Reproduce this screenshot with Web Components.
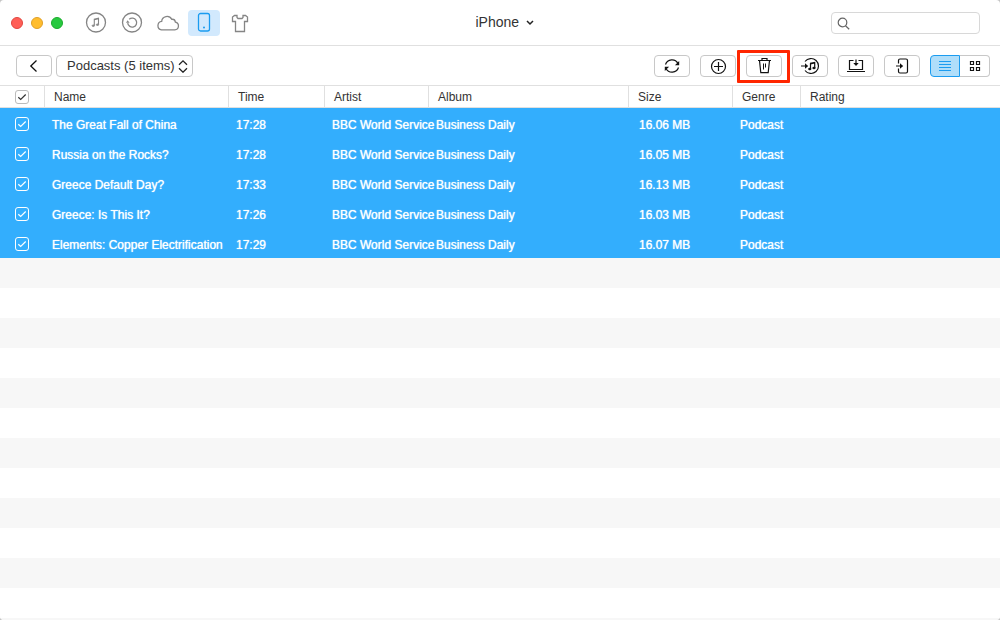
<!DOCTYPE html>
<html lang="en">
<head>
<meta charset="utf-8">
<title>iPhone</title>
<style>
  html {
    background: #c4c4c4;
  }
  body {
    margin: 0;
    font-family: "Liberation Sans", Arial, sans-serif;
    font-size: 12px;
    color: #333;
  }
</style>
</head>
<body>
<device-window>
  <title-bar slot="title">
    <nav-tab label="Music">
      <svg width="22" height="22" viewBox="0 0 22 22" fill="none" stroke="currentColor" stroke-width="1.3">
        <circle cx="11" cy="10.500" r="9.500"/>
        <path d="M9.300 13.500V7.200l4.200-.9v6.200M9.300 7.600l4.200-.9" stroke-width="1.100"/>
        <ellipse cx="8.300" cy="13.700" rx="1.200" ry=".8" fill="currentColor" stroke-width=".8"/>
        <ellipse cx="12.500" cy="12.700" rx="1.200" ry=".8" fill="currentColor" stroke-width=".8"/>
      </svg>
    </nav-tab>
    <nav-tab label="Backups">
      <svg width="22" height="22" viewBox="0 0 22 22" fill="none" stroke="currentColor" stroke-width="1.3">
        <circle cx="11" cy="10.500" r="9.500"/>
        <path d="M8.200 7.200a4.500 4.500 0 1 1-1.500 4"/>
        <path d="M5 10.800l1.600-2.600 2 2.600z" fill="currentColor" stroke="none"/>
      </svg>
    </nav-tab>
    <nav-tab label="iCloud">
      <svg width="24" height="22" viewBox="0 0 24 22" fill="none" stroke="currentColor" stroke-width="1.3">
        <path d="M5.500 17.800h13.300a3.900 3.900 0 0 0 .6-7.700 3.300 3.300 0 0 0-3.700-2.800A5.300 5.300 0 0 0 5.700 9.300a4.300 4.300 0 0 0-.2 8.500z"/>
      </svg>
    </nav-tab>
    <nav-tab label="Device" active>
      <svg width="14" height="22" viewBox="0 0 14 22" fill="none" stroke="currentColor" stroke-width="1.3">
        <rect x="1.500" y="1.500" width="11" height="17.500" rx="2"/>
        <circle cx="7" cy="15.500" r="1" fill="currentColor" stroke="none"/>
      </svg>
    </nav-tab>
    <nav-tab label="Toolkit">
      <svg width="18" height="22" viewBox="0 0 18 22" fill="none" stroke="currentColor" stroke-width="1.3">
        <path d="M6 3.500H3.500L1.500 5v4.500h3v10h9v-10h3V5l-2-1.500H12v2L11 6.500H7l-1-1z"/>
      </svg>
    </nav-tab>
  </title-bar>

  <tool-bar slot="tools">
    <tool-button slot="start" label="Back">
      <svg width="20" height="20" viewBox="0 0 20 20" fill="none" stroke="currentColor" stroke-width="1.300">
        <path d="M12.500 4.500L6.800 10l5.700 5.500"/>
      </svg>
    </tool-button>
    <category-picker slot="start"></category-picker>

    <tool-button label="Refresh">
      <svg width="20" height="20" viewBox="0 0 20 20" fill="none" stroke="currentColor" stroke-width="1.200">
        <path d="M3.500 8.500A6.800 6.800 0 0 1 16 7.500M16.500 11.500A6.800 6.800 0 0 1 4 12.500"/>
        <path d="M17.200 5v4.300h-4.300zM2.800 15v-4.300h4.300z" fill="currentColor" stroke="none"/>
      </svg>
    </tool-button>
    <tool-button label="Add">
      <svg width="20" height="20" viewBox="0 0 20 20" fill="none" stroke="currentColor" stroke-width="1.200">
        <circle cx="10.500" cy="10.500" r="7"/>
        <path d="M10.500 6v9M6 10.500h9"/>
      </svg>
    </tool-button>
    <tool-button label="Delete" marked>
      <svg width="20" height="20" viewBox="0 0 20 20" fill="none" stroke="currentColor">
        <path d="M4 4.500h13M8 4.500v-2h5v2" stroke-width="1.200"/>
        <path d="M5.500 4.500l1.300 12.200h7.400l1.300-12.200" stroke-width="1.200"/>
        <path d="M9.500 7.500v6M11.500 7.500v4"/>
      </svg>
    </tool-button>
    <tool-button label="To iTunes">
      <svg width="20" height="20" viewBox="0 0 20 20" fill="none" stroke="currentColor" stroke-width="1.200">
        <path d="M5 5.500a7.500 7.500 0 1 1 0 9"/>
        <path d="M1 10h5"/>
        <path d="M5 7.300l3.200 2.700L5 12.700z" fill="currentColor" stroke="none"/>
        <path d="M10.500 13V7.300l4.200-.9V12M10.500 7.800l4.200-.9"/>
        <ellipse cx="9.800" cy="13" rx="1" ry=".7" fill="currentColor"/>
        <ellipse cx="14" cy="12" rx="1" ry=".7" fill="currentColor"/>
      </svg>
    </tool-button>
    <tool-button label="To computer">
      <svg width="20" height="20" viewBox="0 0 20 20" fill="none" stroke="currentColor" stroke-width="1.200">
        <path d="M7.500 4.500h-4v9h13v-9h-4M1 15.500h18"/>
        <path d="M10 3.500v5"/>
        <path d="M7.300 7h5.400L10 10z" fill="currentColor" stroke="none"/>
      </svg>
    </tool-button>
    <tool-button label="To device">
      <svg width="20" height="20" viewBox="0 0 20 20" fill="none" stroke="currentColor" stroke-width="1.200">
        <path d="M6.500 7.500v-3q0-1.500 1.500-1.500h6q1.500 0 1.500 1.500v11q0 1.500-1.500 1.500H8q-1.500 0-1.500-1.500v-3"/>
        <path d="M4 10h5"/>
        <path d="M8 7.300l3.200 2.700L8 12.700z" fill="currentColor" stroke="none"/>
      </svg>
    </tool-button>
    <view-switch></view-switch>
  </tool-bar>

  <track-table></track-table>
</device-window>

<script>
class DeviceWindow extends HTMLElement {
  constructor() {
    super();
    this.attachShadow({ mode: "open" });
    this.shadowRoot.innerHTML = `
      <style>
      :host {
        display: flex;
        flex-direction: column;
        min-height: 100vh;
        background: white;
        border-radius: 4px;
        overflow: hidden;
      }
      main {
        flex: 1;
        display: flex;
        flex-direction: column;
      }
      </style>
      <slot name="title"></slot>
      <slot name="tools"></slot>
      <main><slot></slot></main>
    `;
  }
}

class TitleBar extends HTMLElement {
  constructor() {
    super();
    this.attachShadow({ mode: "open" });
    this.shadowRoot.innerHTML = `
      <style>
      :host {
        display: grid;
        grid-template-columns: 1fr auto 1fr;
        align-items: center;
        height: 45px;
        padding: 0 20px 0 11px;
        border-bottom: 1px solid #e0e0e0;
      }
      .start {
        display: flex;
        align-items: center;
        gap: 17px;
      }
      .lights {
        display: flex;
        gap: 8px;
      }
      .light {
        box-sizing: border-box;
        width: 12px;
        height: 12px;
        padding: 0;
        border-radius: 50%;
        border: 1px solid #e2463f;
        background: #ff5f57;
      }
      .light.minimize {
        border-color: #e0a028;
        background: #ffbd2e;
      }
      .light.zoom {
        border-color: #1bac2c;
        background: #28c940;
      }
      nav {
        display: flex;
        gap: 4px;
      }
      .device {
        display: grid;
        align-items: center;
        padding-left: 18px;
      }
      .device select,
      .device svg {
        grid-area: 1 / 1;
      }
      .device svg {
        justify-self: end;
        pointer-events: none;
      }
      .device select {
        appearance: none;
        border: 0;
        margin: 0;
        padding: 0 14px 2px 0;
        background: none;
        font: 14px "Liberation Sans", Arial, sans-serif;
        color: #333;
      }
      .search {
        box-sizing: border-box;
        justify-self: end;
        display: flex;
        align-items: center;
        gap: 4px;
        width: 149px;
        height: 22px;
        padding: 0 5px;
        border: 1px solid #d8d8d8;
        border-radius: 4px;
      }
      .search input {
        flex: 1;
        min-width: 0;
        padding: 0;
        border: 0;
        outline: 0;
        background: none;
        font: inherit;
      }
      </style>
      <div class="start">
        <div class="lights">
          <button class="light" aria-label="Close"></button>
          <button class="light minimize" aria-label="Minimize"></button>
          <button class="light zoom" aria-label="Zoom"></button>
        </div>
        <nav><slot></slot></nav>
      </div>
      <div class="device">
        <select aria-label="Device">
          <option>iPhone</option>
        </select>
        <svg width="8" height="8" viewBox="0 0 8 8" fill="none" stroke="#222" stroke-width="1.500">
          <path d="M1 2l3 3 3-3"/>
        </svg>
      </div>
      <label class="search">
        <svg width="14" height="14" viewBox="0 0 14 14" fill="none" stroke="#666" stroke-width="1.200">
          <circle cx="5.500" cy="6.500" r="4.300"/>
          <path d="M8.500 9.700l3.700 3.500"/>
        </svg>
        <input type="text" aria-label="Search">
      </label>
    `;
  }
}

class NavTab extends HTMLElement {
  constructor() {
    super();
    this.attachShadow({ mode: "open" });
    this.shadowRoot.innerHTML = `
      <style>
      :host {
        display: block;
      }
      button {
        display: flex;
        align-items: center;
        justify-content: center;
        width: 32px;
        height: 26px;
        padding: 0;
        border: 0;
        border-radius: 4px;
        background: none;
        color: #858585;
      }
      :host([active]) button {
        background: #d2e9fd;
        color: #1b9cf0;
      }
      </style>
      <button><slot></slot></button>
    `;
  }

  connectedCallback() {
    this.shadowRoot
      .querySelector("button")
      .setAttribute("aria-label", this.getAttribute("label"));
  }
}

class ToolBar extends HTMLElement {
  constructor() {
    super();
    this.attachShadow({ mode: "open" });
    this.shadowRoot.innerHTML = `
      <style>
      :host {
        display: flex;
        align-items: center;
        justify-content: space-between;
        height: 39px;
        padding: 0 10px 0 16px;
      }
      .start {
        display: flex;
        gap: 4px;
      }
      .end {
        display: flex;
        gap: 10px;
      }
      </style>
      <div class="start"><slot name="start"></slot></div>
      <div class="end"><slot></slot></div>
    `;
  }
}

class ToolButton extends HTMLElement {
  constructor() {
    super();
    this.attachShadow({ mode: "open" });
    this.shadowRoot.innerHTML = `
      <style>
      :host {
        display: block;
        position: relative;
      }
      button {
        display: flex;
        align-items: center;
        justify-content: center;
        box-sizing: border-box;
        width: 36px;
        height: 22px;
        padding: 0;
        border: 1px solid #c8c8c8;
        border-radius: 4px;
        background: white;
        color: #111;
      }
      /* callout frame drawn over the neighbours */
      :host([marked])::after {
        content: "";
        position: absolute;
        inset: -5px -8px -6px -9px;
        border: 3px solid #ff2600;
        border-radius: 1px;
        pointer-events: none;
      }
      </style>
      <button><slot></slot></button>
    `;
  }

  connectedCallback() {
    this.shadowRoot
      .querySelector("button")
      .setAttribute("aria-label", this.getAttribute("label"));
  }
}

class CategoryPicker extends HTMLElement {
  constructor() {
    super();
    this.attachShadow({ mode: "open" });
    this.shadowRoot.innerHTML = `
      <style>
      :host {
        display: grid;
        align-items: center;
      }
      select,
      svg {
        grid-area: 1 / 1;
      }
      svg {
        justify-self: end;
        margin-right: 5px;
        pointer-events: none;
      }
      select {
        appearance: none;
        box-sizing: border-box;
        height: 22px;
        margin: 0;
        padding: 0 17px 0 10px;
        border: 1px solid #c8c8c8;
        border-radius: 4px;
        background: white;
        font: 13px "Liberation Sans", Arial, sans-serif;
        color: #333;
      }
      </style>
      <select aria-label="Category">
        <option>Podcasts (5 items)</option>
      </select>
      <svg width="10" height="14" viewBox="0 0 10 14" fill="none" stroke="#222" stroke-width="1.300">
        <path d="M1 5.800l4-4 4 4M1 9.200l4 4 4-4"/>
      </svg>
    `;
  }
}

class ViewSwitch extends HTMLElement {
  constructor() {
    super();
    this.attachShadow({ mode: "open" });
    this.shadowRoot.innerHTML = `
      <style>
      :host {
        display: flex;
      }
      button {
        display: flex;
        align-items: center;
        justify-content: center;
        box-sizing: border-box;
        width: 30px;
        height: 22px;
        padding: 0;
        border: 1px solid #c8c8c8;
        background: white;
        color: #111;
      }
      button:first-of-type {
        border-radius: 4px 0 0 4px;
      }
      button:last-of-type {
        border-left: 0;
        border-radius: 0 4px 4px 0;
      }
      button[aria-pressed="true"] {
        border-color: #1b9cf0;
        background: #b0defa;
        color: #1b9cf0;
      }
      </style>
      <button aria-label="List" aria-pressed="true">
        <svg width="12" height="12" viewBox="0 0 12 12" stroke="currentColor">
          <path d="M0 1.500h12M0 4.500h12M0 7.500h12M0 10.500h12"/>
        </svg>
      </button>
      <button aria-label="Grid" aria-pressed="false">
        <svg width="12" height="12" viewBox="0 0 12 12" fill="none" stroke="currentColor" stroke-width="1.200">
          <path d="M1.500 1.500h3v3h-3zM7.500 1.500h3v3h-3zM1.500 7.500h3v3h-3zM7.500 7.500h3v3h-3z"/>
        </svg>
      </button>
    `;
    this.buttons = this.shadowRoot.querySelectorAll("button");
    this.buttons.forEach((button) => {
      button.addEventListener("click", () => {
        this.buttons.forEach((b) => b.setAttribute("aria-pressed", b === button));
      });
    });
  }
}

class CheckBox extends HTMLElement {
  constructor() {
    super();
    this.attachShadow({ mode: "open" });
    this.shadowRoot.innerHTML = `
      <style>
      :host {
        display: grid;
        width: 14px;
        height: 14px;
      }
      input,
      svg {
        grid-area: 1 / 1;
      }
      input {
        appearance: none;
        box-sizing: border-box;
        width: 14px;
        height: 14px;
        margin: 0;
        border: 1px solid var(--box-line, #bbb);
        border-radius: 3px;
      }
      svg {
        pointer-events: none;
      }
      input:not(:checked) + svg {
        visibility: hidden;
      }
      </style>
      <input type="checkbox" checked>
      <svg width="14" height="14" viewBox="0 0 14 14" fill="none" stroke="currentColor" stroke-width="1.200">
        <path d="M3.300 7.200l2.400 2.300 5-5"/>
      </svg>
    `;
    this.input = this.shadowRoot.querySelector("input");
  }

  connectedCallback() {
    this.input.setAttribute("aria-label", this.getAttribute("label"));
  }
}

class TrackTable extends HTMLElement {
  constructor() {
    super();
    this.attachShadow({ mode: "open" });
    this.shadowRoot.innerHTML = `
      <style>
      :host {
        flex: 1;
        display: flex;
        flex-direction: column;
      }
      table {
        width: 100%;
        table-layout: fixed;
        border-collapse: separate;
        border-spacing: 0;
      }
      .check { width: 45px; }
      .name { width: 184px; }
      .time { width: 96px; }
      .artist { width: 104px; }
      .album { width: 200px; }
      .size { width: 104px; }
      .genre { width: 68px; }
      th {
        box-sizing: border-box;
        height: 23px;
        padding: 0 0 0 9px;
        border: solid #e0e0e0;
        border-width: 1px 1px 1px 0;
        text-align: left;
        font-weight: normal;
        line-height: 14px;
      }
      th:last-child {
        border-right: 0;
      }
      td {
        box-sizing: border-box;
        height: 30px;
        padding: 4px 0 0 7px;
        background: #33aefd;
        color: white;
        line-height: 14px;
        white-space: nowrap;
        text-shadow: 0 0 1px white;
      }
      td:nth-child(6) {
        padding-left: 10px;
      }
      th:first-child {
        padding-left: 15px;
      }
      td:first-child {
        padding: 2px 0 0 15px;
        --box-line: white;
      }
      .empty {
        flex: 1;
        background: repeating-linear-gradient(#f7f7f7 0 30px, white 30px 60px);
      }
      </style>
      <table>
        <colgroup>
          <col class="check"><col class="name"><col class="time"><col class="artist">
          <col class="album"><col class="size"><col class="genre"><col>
        </colgroup>
        <thead>
          <tr>
            <th><check-box label="Select all"></check-box></th>
            <th>Name</th>
            <th>Time</th>
            <th>Artist</th>
            <th>Album</th>
            <th>Size</th>
            <th>Genre</th>
            <th>Rating</th>
          </tr>
        </thead>
        <tbody></tbody>
      </table>
      <div class="empty"></div>
    `;

    this.tracks = [
      { name: "The Great Fall of China", time: "17:28", size: "16.06 MB" },
      { name: "Russia on the Rocks?", time: "17:28", size: "16.05 MB" },
      { name: "Greece Default Day?", time: "17:33", size: "16.13 MB" },
      { name: "Greece: Is This It?", time: "17:26", size: "16.03 MB" },
      { name: "Elements: Copper Electrification", time: "17:29", size: "16.07 MB" },
    ];
  }

  connectedCallback() {
    this.renderTracks();
  }

  renderTracks() {
    this.shadowRoot.querySelector("tbody").innerHTML = this.tracks
      .map(
        (track) => `
          <tr>
            <td><check-box label="${track.name}"></check-box></td>
            <td>${track.name}</td>
            <td>${track.time}</td>
            <td>BBC World Service</td>
            <td>Business Daily</td>
            <td>${track.size}</td>
            <td>Podcast</td>
            <td></td>
          </tr>`
      )
      .join("");
  }
}

customElements.define("device-window", DeviceWindow);
customElements.define("title-bar", TitleBar);
customElements.define("nav-tab", NavTab);
customElements.define("tool-bar", ToolBar);
customElements.define("tool-button", ToolButton);
customElements.define("category-picker", CategoryPicker);
customElements.define("view-switch", ViewSwitch);
customElements.define("check-box", CheckBox);
customElements.define("track-table", TrackTable);
</script>
</body>
</html>
